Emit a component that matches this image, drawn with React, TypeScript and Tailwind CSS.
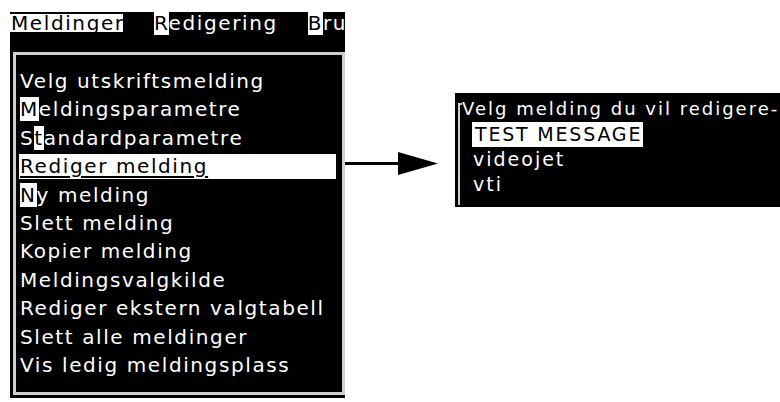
import React from "react";

const items = [
    "Velg utskriftsmelding",
    "Meldingsparametre",
    "Standardparametre",
    "Rediger melding",
    "Ny melding",
    "Slett melding",
    "Kopier melding",
    "Meldingsvalgkilde",
    "Rediger ekstern valgtabell",
    "Slett alle meldinger",
    "Vis ledig meldingsplass",
];

// which letter of each item carries the hot-key box
const hotkey: Record<number, number> = {1: 0, 2: 1, 4: 0};

function MenuRow({text, idx}: {text: string; idx: number}) {
    if (idx === 3) {
        return (
            <div className="flex h-[28.4px] items-center">
                <div className="h-[25px] w-full bg-white pl-[1px] leading-[25px] text-black underline decoration-[1.5px] underline-offset-[3px]">
                    {text}
                </div>
            </div>
        );
    }
    const k = hotkey[idx];
    if (k === undefined) {
        return <div className="h-[28.4px] pl-[1px] leading-[28.4px]">{text}</div>;
    }
    return (
        <div className="h-[28.4px] pl-[1px] leading-[28.4px]">
            {text.slice(0, k)}
            <span className="bg-white text-black">{text[k]}</span>
            {text.slice(k + 1)}
        </div>
    );
}

export default function App() {
    return (
        <div className="flex h-[402px] w-[780px] items-start overflow-hidden bg-white font-['DejaVu_Sans',sans-serif] text-white">
            {/* left screen */}
            <div className="ml-[10px] mt-[12px] flex h-[386px] w-[335px] flex-col bg-black text-[20px] tracking-[1.6px]">
                <div className="flex h-[40px] overflow-hidden whitespace-nowrap pt-[2px] leading-[18px]">
                    <span className="h-[18px] w-[113px] bg-white pl-[1px] text-black">Meldinger</span>
                    <span className="ml-[31px]">
                        <span className="bg-white text-black">R</span>edigering
                    </span>
                    <span className="ml-[30px]">
                        <span className="bg-white text-black">B</span>ru
                    </span>
                </div>
                <div className="mb-[3px] ml-[3px] flex-1 border-[3px] border-[#cfcfcf] pl-[3px] pr-[6px] pt-[12px] whitespace-nowrap">
                    {items.map((t, i) => (
                        <MenuRow key={i} text={t} idx={i}/>
                    ))}
                </div>
            </div>

            {/* arrow */}
            <svg className="mt-[150px] shrink-0" width="93" height="28" viewBox="0 0 93 28">
                <line x1="0" y1="13.5" x2="56" y2="13.5" stroke="black" strokeWidth="3"/>
                <polygon points="53,2 93,13.5 53,25" fill="black"/>
            </svg>

            {/* right screen */}
            <div className="ml-[17px] mt-[93px] flex h-[114px] flex-1 flex-col bg-black pl-[3px] pt-[6px] tracking-[2px]">
                <div className="flex whitespace-nowrap text-[18px] leading-[20px]">
                    <div className="mt-[4px] w-[4px] border-l-2 border-t-2 border-[#cfcfcf]"/>
                    <span>Velg melding du vil redigere-</span>
                </div>
                <div className="mb-[2px] flex flex-1 flex-col items-start whitespace-nowrap border-l-2 border-[#cfcfcf] pl-[12px] pt-[3px] text-[19px] leading-[25px]">
                    <div className="h-[25px] bg-white pl-[3px] pr-[1px] tracking-[1.8px] text-black">TEST MESSAGE</div>
                    <div className="h-[25px] pl-[1px]">videojet</div>
                    <div className="h-[25px] pl-[1px]">vti</div>
                </div>
            </div>
        </div>
    );
}
